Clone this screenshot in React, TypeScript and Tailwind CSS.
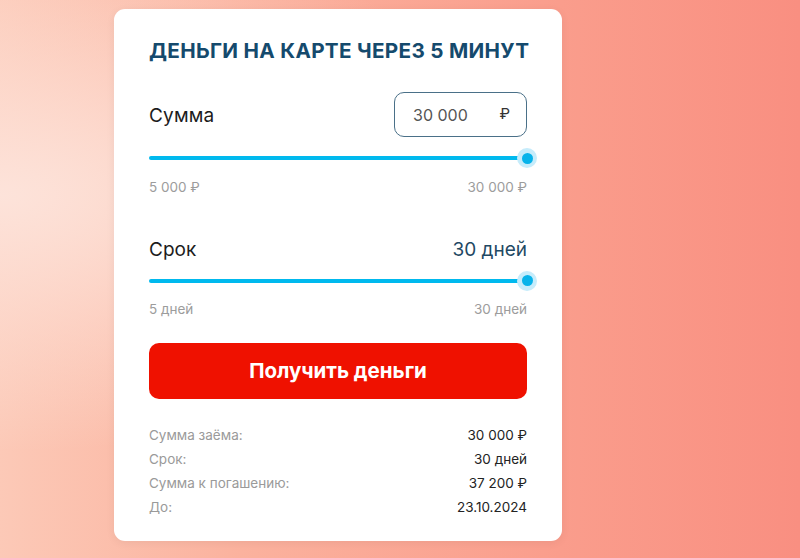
import React from "react";

function Slider() {
  return (
    <div className="relative h-[4px] w-full rounded-full bg-[#00b9ee]">
      <div className="absolute right-[-10px] top-[-8px] flex h-[20px] w-[20px] items-center justify-center rounded-full bg-[#c6ecfb]">
        <div className="h-[11px] w-[11px] rounded-full bg-[#08b3ea]" />
      </div>
    </div>
  );
}

function Row({ label, value }: { label: string; value: string }) {
  return (
    <div className="flex h-[24px] items-center justify-between text-[13.5px]">
      <span className="text-[#9a9a9a]">{label}</span>
      <span className="text-[#232323]">{value}</span>
    </div>
  );
}

export default function App() {
  return (
    <div
      className="flex h-[558px] w-[800px] overflow-hidden bg-[radial-gradient(ellipse_at_0%_35%,#fde3da_0%,rgba(253,226,216,0)_50%),linear-gradient(90deg,#fcc9b7_0%,#fbb29e_30%,#fa9d8c_70%,#f98f81_100%)] pl-[114px] pt-[9px]"
      style={{ fontFamily: "Inter, 'Noto Sans', sans-serif" }}
    >
      <div className="flex h-[532px] w-[448px] flex-col rounded-[11px] bg-white px-[35px] pt-[29px] shadow-[0_2px_10px_rgba(0,0,0,0.06)]">
        <h1 className="whitespace-nowrap text-[20.7px] font-bold leading-[26px] tracking-[0.3px] text-[#154a6d]">
          ДЕНЬГИ НА КАРТЕ ЧЕРЕЗ 5 МИНУТ
        </h1>

        <div className="mt-[28px] flex items-center justify-between">
          <span className="pt-[3px] text-[19px] tracking-[0.2px] text-[#1c1c1c]">Сумма</span>
          <div className="flex h-[45px] w-[133px] items-center justify-between rounded-[10px] border border-[#4a7088] pl-[18px] pr-[16px]">
            <span className="text-[16px] text-[#555]">30 000</span>
            <span className="text-[15px] text-[#333]">₽</span>
          </div>
        </div>

        <div className="mt-[19px]">
          <Slider />
        </div>
        <div className="mt-[17px] flex justify-between text-[13.5px] text-[#9c9c9c]">
          <span>5 000 ₽</span>
          <span>30 000 ₽</span>
        </div>

        <div className="mt-[39px] flex items-center justify-between">
          <span className="text-[19px] text-[#1c1c1c]">Срок</span>
          <span className="text-[19px] text-[#1f4964]">30 дней</span>
        </div>

        <div className="mt-[14px]">
          <Slider />
        </div>
        <div className="mt-[16px] flex justify-between text-[13.5px] text-[#9c9c9c]">
          <span>5 дней</span>
          <span>30 дней</span>
        </div>

        <button className="mt-[24px] flex h-[56px] w-full items-center justify-center rounded-[10px] bg-[#ef1100] text-[20.5px] font-bold text-white">
          Получить деньги
        </button>

        <div className="mt-[24px] flex flex-col">
          <Row label="Сумма заёма:" value="30 000 ₽" />
          <Row label="Срок:" value="30 дней" />
          <Row label="Сумма к погашению:" value="37 200 ₽" />
          <Row label="До:" value="23.10.2024" />
        </div>
      </div>
    </div>
  );
}
